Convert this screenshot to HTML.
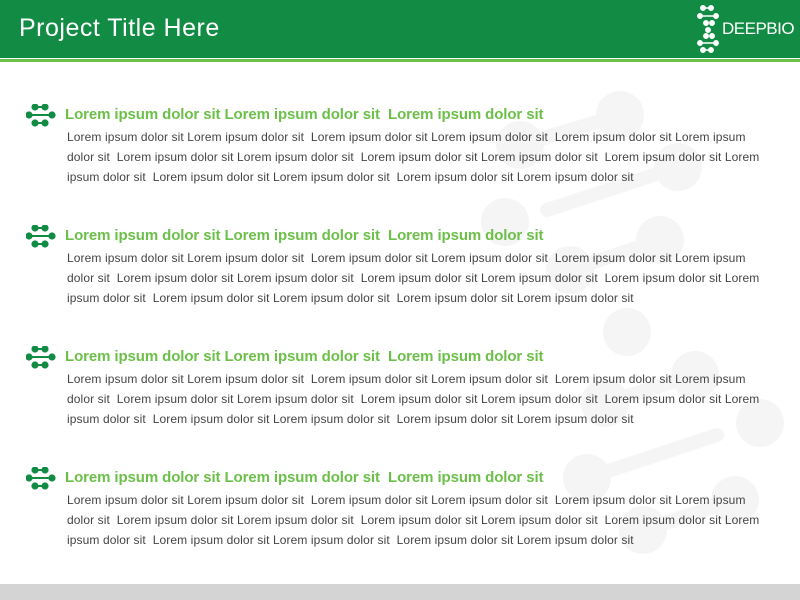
<!DOCTYPE html>
<html><head><style>
body{margin:0;width:800px;height:600px;position:relative;background:#fff;font-family:"Liberation Sans",Arial,sans-serif;overflow:hidden}
.hdr{position:absolute;left:0;top:0;width:800px;height:58px;background:#128c44}
.hdr h1{margin:0;position:absolute;left:19px;top:14px;color:#fff;font-size:25px;font-weight:normal;letter-spacing:0.5px}
.line{position:absolute;left:0;top:59px;width:800px;height:3px;background:#6cc04a}
.foot{position:absolute;left:0;top:584px;width:800px;height:16px;background:#d4d4d4}
.sec{position:absolute;left:26px;width:760px}
.sec h2{margin:0;position:absolute;left:39px;top:2px;color:#6cc04a;font-size:15px;letter-spacing:-0.1px;font-weight:bold;white-space:nowrap}
.sec p{margin:0;position:absolute;left:41px;top:23px;color:#444;font-size:12px;letter-spacing:0.1px;line-height:20px;white-space:pre}
.ic{position:absolute;left:0;top:0}
</style></head><body>
<svg style="position:absolute;left:0;top:0" width="800" height="600">
<g fill="#f5f5f5" stroke="#f5f5f5" stroke-width="14" stroke-linecap="round">
<line x1="520" y1="145" x2="620" y2="115"/><line x1="547" y1="210" x2="678" y2="167"/>
<line x1="570" y1="270" x2="660" y2="240"/><line x1="605" y1="403" x2="695" y2="375"/>
<line x1="587" y1="478" x2="717" y2="435"/><line x1="643" y1="530" x2="735" y2="500"/>
<g stroke="none">
<circle cx="620" cy="115" r="24"/><circle cx="520" cy="145" r="24"/><circle cx="678" cy="167" r="24"/>
<circle cx="505" cy="222" r="24"/><circle cx="660" cy="240" r="24"/><circle cx="570" cy="270" r="24"/>
<circle cx="627" cy="332" r="24"/><circle cx="695" cy="375" r="24"/><circle cx="605" cy="403" r="24"/>
<circle cx="760" cy="423" r="24"/><circle cx="587" cy="478" r="24"/><circle cx="735" cy="500" r="24"/>
<circle cx="643" cy="530" r="24"/></g></g></svg>
<div class="hdr"><h1>Project Title Here</h1>
<svg style="position:absolute;left:696px;top:5px" width="30" height="48" fill="#fff" stroke="#fff" stroke-width="1.5">
<circle cx="7" cy="3" r="2.2"/><circle cx="15" cy="3" r="2.2"/><line x1="7" y1="3" x2="15" y2="3"/>
<circle cx="4" cy="11" r="2.2"/><circle cx="20" cy="11" r="2.2"/><line x1="4" y1="11" x2="20" y2="11"/>
<circle cx="10" cy="18" r="2.2"/><circle cx="16" cy="18" r="2.2"/>
<circle cx="12" cy="25" r="2.2"/>
<circle cx="10" cy="31" r="2.2"/><circle cx="16" cy="31" r="2.2"/>
<circle cx="4" cy="38" r="2.2"/><circle cx="20" cy="38" r="2.2"/><line x1="4" y1="38" x2="20" y2="38"/>
<circle cx="7" cy="45" r="2.2"/><circle cx="15" cy="45" r="2.2"/><line x1="7" y1="45" x2="15" y2="45"/>
</svg>
<div style="position:absolute;left:722px;top:19px;color:#fff;font-size:17px;letter-spacing:-0.5px">DEEPBIO</div>
</div>
<div class="line"></div>
<div class="foot"></div>
<div class="sec" style="top:104px"><svg class="ic" width="32" height="26" fill="#128c44" stroke="#128c44" stroke-width="2"><circle cx="9" cy="3" r="2.6"/><circle cx="19" cy="3" r="2.6"/><line x1="9" y1="3" x2="19" y2="3"/><circle cx="3" cy="11" r="2.6"/><circle cx="26" cy="11" r="2.6"/><line x1="3" y1="11" x2="26" y2="11"/><circle cx="9" cy="19" r="2.6"/><circle cx="19" cy="19" r="2.6"/><line x1="9" y1="19" x2="19" y2="19"/></svg><h2>Lorem ipsum dolor sit Lorem ipsum dolor sit&nbsp; Lorem ipsum dolor sit</h2><p>Lorem ipsum dolor sit Lorem ipsum dolor sit  Lorem ipsum dolor sit Lorem ipsum dolor sit  Lorem ipsum dolor sit Lorem ipsum
dolor sit  Lorem ipsum dolor sit Lorem ipsum dolor sit  Lorem ipsum dolor sit Lorem ipsum dolor sit  Lorem ipsum dolor sit Lorem
ipsum dolor sit  Lorem ipsum dolor sit Lorem ipsum dolor sit  Lorem ipsum dolor sit Lorem ipsum dolor sit</p></div>
<div class="sec" style="top:225px"><svg class="ic" width="32" height="26" fill="#128c44" stroke="#128c44" stroke-width="2"><circle cx="9" cy="3" r="2.6"/><circle cx="19" cy="3" r="2.6"/><line x1="9" y1="3" x2="19" y2="3"/><circle cx="3" cy="11" r="2.6"/><circle cx="26" cy="11" r="2.6"/><line x1="3" y1="11" x2="26" y2="11"/><circle cx="9" cy="19" r="2.6"/><circle cx="19" cy="19" r="2.6"/><line x1="9" y1="19" x2="19" y2="19"/></svg><h2>Lorem ipsum dolor sit Lorem ipsum dolor sit&nbsp; Lorem ipsum dolor sit</h2><p>Lorem ipsum dolor sit Lorem ipsum dolor sit  Lorem ipsum dolor sit Lorem ipsum dolor sit  Lorem ipsum dolor sit Lorem ipsum
dolor sit  Lorem ipsum dolor sit Lorem ipsum dolor sit  Lorem ipsum dolor sit Lorem ipsum dolor sit  Lorem ipsum dolor sit Lorem
ipsum dolor sit  Lorem ipsum dolor sit Lorem ipsum dolor sit  Lorem ipsum dolor sit Lorem ipsum dolor sit</p></div>
<div class="sec" style="top:346px"><svg class="ic" width="32" height="26" fill="#128c44" stroke="#128c44" stroke-width="2"><circle cx="9" cy="3" r="2.6"/><circle cx="19" cy="3" r="2.6"/><line x1="9" y1="3" x2="19" y2="3"/><circle cx="3" cy="11" r="2.6"/><circle cx="26" cy="11" r="2.6"/><line x1="3" y1="11" x2="26" y2="11"/><circle cx="9" cy="19" r="2.6"/><circle cx="19" cy="19" r="2.6"/><line x1="9" y1="19" x2="19" y2="19"/></svg><h2>Lorem ipsum dolor sit Lorem ipsum dolor sit&nbsp; Lorem ipsum dolor sit</h2><p>Lorem ipsum dolor sit Lorem ipsum dolor sit  Lorem ipsum dolor sit Lorem ipsum dolor sit  Lorem ipsum dolor sit Lorem ipsum
dolor sit  Lorem ipsum dolor sit Lorem ipsum dolor sit  Lorem ipsum dolor sit Lorem ipsum dolor sit  Lorem ipsum dolor sit Lorem
ipsum dolor sit  Lorem ipsum dolor sit Lorem ipsum dolor sit  Lorem ipsum dolor sit Lorem ipsum dolor sit</p></div>
<div class="sec" style="top:467px"><svg class="ic" width="32" height="26" fill="#128c44" stroke="#128c44" stroke-width="2"><circle cx="9" cy="3" r="2.6"/><circle cx="19" cy="3" r="2.6"/><line x1="9" y1="3" x2="19" y2="3"/><circle cx="3" cy="11" r="2.6"/><circle cx="26" cy="11" r="2.6"/><line x1="3" y1="11" x2="26" y2="11"/><circle cx="9" cy="19" r="2.6"/><circle cx="19" cy="19" r="2.6"/><line x1="9" y1="19" x2="19" y2="19"/></svg><h2>Lorem ipsum dolor sit Lorem ipsum dolor sit&nbsp; Lorem ipsum dolor sit</h2><p>Lorem ipsum dolor sit Lorem ipsum dolor sit  Lorem ipsum dolor sit Lorem ipsum dolor sit  Lorem ipsum dolor sit Lorem ipsum
dolor sit  Lorem ipsum dolor sit Lorem ipsum dolor sit  Lorem ipsum dolor sit Lorem ipsum dolor sit  Lorem ipsum dolor sit Lorem
ipsum dolor sit  Lorem ipsum dolor sit Lorem ipsum dolor sit  Lorem ipsum dolor sit Lorem ipsum dolor sit</p></div>
</body></html>
